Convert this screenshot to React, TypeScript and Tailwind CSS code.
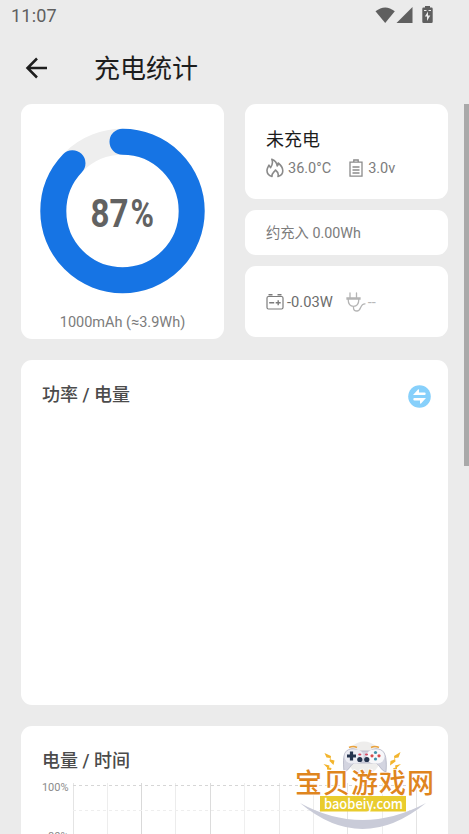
import React from 'react';

const FONT = "font-[Roboto,'Noto_Sans_CJK_SC',sans-serif]";

const RADIUS = 69.2;
const CIRCUMFERENCE = 2 * Math.PI * RADIUS;

const gridColumns = [
  { x: 31.5, color: '#e4e4e4' },
  { x: 65.5, color: '#ededed' },
  { x: 99.5, color: '#d9d9d9' },
  { x: 133.5, color: '#ececec' },
  { x: 168.5, color: '#dcdcdc' },
  { x: 202.5, color: '#efefef' },
  { x: 237.5, color: '#e9e9e9' },
  { x: 271.5, color: '#ededed' },
  { x: 305.5, color: '#e4e4e4' },
  { x: 340.5, color: '#ededed' },
  { x: 374.5, color: '#e4e4e4' },
];

interface CardProps {
  className?: string;
  children?: React.ReactNode;
}

const Card: React.FC<CardProps> = ({ className = '', children }) => (
  <section className={`bg-white rounded-[11px] ${className}`}>{children}</section>
);

const StatusBar = () => (
  <div className="flex h-8 items-center justify-between pl-[11px] pr-[35px] text-[#5f5f5f]">
    <span className="text-[18px] leading-8 tracking-[0.2px]">11:07</span>
    <svg className="-mt-0.5" width="60" height="20" viewBox="0 0 60 20" fill="currentColor">
      <path d="M1.5 6.2Q11.2-1.4 20.8 6.2L11.2 18z" />
      <path d="M38.5 2v16h-16z" />
      <path d="M51 1h5v1.5h1.5q1.2 0 1.2 1.2v13.1q0 1.2-1.2 1.2h-8q-1.2 0-1.2-1.2V3.7q0-1.2 1.2-1.2H51z" />
      <path d="M50 5.5h2.500M54.500 5.500h2.500" stroke="#ebebeb" />
      <path d="M54 6.500v4h2.300l-3.300 5.500v-4.500h-2.200z" fill="#ebebeb" />
    </svg>
  </div>
);

const Header = () => (
  <header className="flex h-[72px] items-center pl-[25px] text-[#1d1d1d]">
    <svg width="24" height="24" viewBox="0 0 24 24" fill="none" stroke="currentColor" strokeWidth="2.500">
      <path d="M12 2.500L2.500 12l9.500 9.500M2.500 12H22" />
    </svg>
    <h1 className="ml-[45px] pt-px text-[26px] leading-9">充电统计</h1>
  </header>
);

const FireIcon = () => (
  <svg width="18" height="20" viewBox="0 0 18 20" fill="none" stroke="#8a8a8a" strokeWidth="1.600" strokeLinejoin="round">
    <path d="M6 18.500C2.500 17.500.8 15 1 12c.2-2 1.200-3.300 2-4.800l1.500 2.500C6.500 7 7 4 5.800 1.200 9 2.500 11 5 11.200 8c.8-.8 1.100-1.800 1-3 2.400 1.800 4.600 4.800 4.600 7.800 0 3-2 5-4.800 5.700.8-2.500 0-4.500-2.600-6.500-1 2-4 3.500-3.400 6.500z" />
  </svg>
);

const ClipboardIcon = () => (
  <svg width="14" height="18" viewBox="0 0 14 18" fill="none" stroke="#8a8a8a" strokeWidth="1.300">
    <path d="M1 3.200h12v14H1zM4.800 3V1h4.400v2M3.500 8h7M3.500 11h7M3.500 14h7" />
  </svg>
);

const BatteryIcon = () => (
  <svg width="18" height="16" viewBox="0 0 18 16" fill="none" stroke="#7c7c7c" strokeWidth="1.200">
    <rect x="1" y="2.500" width="16" height="12.500" rx="1.500" />
    <path d="M2.500 .8h4M11.500.8h4M3.200 8.700h5M9.700 8.700h5M12.200 6.200v5" strokeWidth="1.400" />
  </svg>
);

const PlugIcon = () => (
  <svg width="20" height="20" viewBox="0 0 20 20" fill="none" stroke="#b4b4b4" strokeWidth="1.300" strokeLinecap="round">
    <path d="M4 1v4.500M10.500 1v4.500M1 6h13v1.200H1zM2.200 7.500c0 4.500 2 6.800 5.300 6.800s5.300-2.300 5.300-6.800M7.500 14.500v1.500c0 2 1.200 3 3.500 3 4.500 0 2.500-7.200 8-7.200" />
  </svg>
);

const SwapIcon = () => (
  <svg width="23" height="23" viewBox="0 0 23 23">
    <circle cx="11.500" cy="11.500" r="11.300" fill="#87d0fb" />
    <path d="M5 10L10 4.500q1-.5 1 .5v2.500h5.500q1.200 0 1.200 1.200T16.500 10zM18 13L13 18.500q-1 .5-1-.5v-2.500H6.500q-1.200 0-1.200-1.200T6.500 13z" fill="#fff" />
  </svg>
);

const LevelRing = ({ level }: { level: number }) => (
  <svg width="165" height="166" viewBox="0.5 0 165 166" fill="none">
    <circle cx="83" cy="83" r={RADIUS} stroke="#eee" strokeWidth="26" />
    <circle
      cx="83"
      cy="83"
      r={RADIUS}
      stroke="#1674e4"
      strokeWidth="26"
      strokeLinecap="round"
      strokeDasharray={`${(CIRCUMFERENCE * level) / 100} ${CIRCUMFERENCE}`}
      transform="rotate(-90 83 83)"
    />
    <g className="text-[39.500px] font-bold" fill="#626262">
      <text x="51" y="98.800" textLength="38" lengthAdjust="spacingAndGlyphs">{level}</text>
      <text x="91" y="98.800" textLength="23.500" lengthAdjust="spacingAndGlyphs">%</text>
    </g>
  </svg>
);

const LevelChart = () => (
  <svg width="385" height="70" viewBox="0 0 385 70">
    {gridColumns.map(col => (
      <path key={col.x} d={`M${col.x} 3V70`} stroke={col.color} />
    ))}
    <path d="M31 5.500H375" stroke="#d6d6d6" strokeDasharray="3 3" />
    <path d="M31 30.500H375" stroke="#eee" strokeDasharray="3 3" />
    <path d="M31 55.500H375" stroke="#ddd" strokeDasharray="3 3" />
    <g className="text-[11px]" fill="#8b8b8b" textAnchor="end">
      <text x="26.500" y="11">100%</text>
      <text x="26.500" y="60">80%</text>
    </g>
  </svg>
);

const Gamepad = () => (
  <g>
    <circle cx="74" cy="20" r="16.500" fill="#eeedec" />
    <path
      d="M54 34C53 23 53 14 58 12q5-3 11 1h11q6-4 11-1c5 2 6 11 5 22-5-1-6-7-10-9H64c-4 2-5 8-10 9z"
      fill="#d3d4e0"
      stroke="#a9abbb"
      strokeWidth=".7"
    />
    <rect x="54.500" y="11.500" width="19" height="14" rx="7" fill="#ececf3" />
    <rect x="76.500" y="11.500" width="18" height="14" rx="7" fill="#f7f7fa" />
    <path d="M59 9.500q4-2 8 0M81 9.500q4-2 8 0" fill="none" stroke="#e9a23c" strokeWidth="1.600" />
    <path d="M61.500 13.500v9M57 18h9" stroke="#25344e" strokeWidth="3.200" />
    <circle cx="69.800" cy="21.500" r="2.600" fill="#25344e" />
    <circle cx="76.800" cy="21.500" r="2.600" fill="#25344e" />
    <ellipse cx="69.800" cy="16.500" rx="1.600" ry="1" fill="#d94b64" />
    <ellipse cx="76.500" cy="16.500" rx="1.600" ry="1" fill="#d94b64" />
    <circle cx="85.500" cy="14.500" r="1.600" fill="#3f91a8" />
    <circle cx="85.500" cy="21" r="1.600" fill="#3f91a8" />
    <circle cx="82" cy="17.800" r="1.600" fill="#d84d4d" />
    <circle cx="89" cy="17.800" r="1.600" fill="#d84d4d" />
  </g>
);

const SiteBadge = () => (
  <svg className="absolute left-[290px] top-[738px]" width="150" height="94" viewBox="0 0 150 94">
    <path d="M10 65Q72 117 136 65Q72 99 10 65z" fill="#c9cbd8" />
    <Gamepad />
    <path
      d="M34.500 15l6.500 3-.500 3.500 4 1-1 4.500-4-4 .500-3-3.500-.500zM33.500 26l6 1.500-.500 2 2.500.500-.500 2-4-.500v-2zM110.500 14l-6.500 4 .500 3.500-4 1.500-.500 4.500 5.500-4-.500-3.500 3.500-.500zM111 26l-6 1.500.500 2-2.500 1v1.500l4-.500v-2z"
      fill="#f3b52e"
    />
    <text
      x="5"
      y="55"
      className="font-['Noto_Sans_CJK_SC',sans-serif] text-[27px] font-medium"
      fill="#df851e"
      stroke="#fff"
      strokeWidth="1.600"
      paintOrder="stroke"
      textLength="139"
    >
      宝贝游戏网
    </text>
    <path d="M30 58h86v15.500H30z" fill="#e9cc2d" />
    <text x="34" y="70.500" className="font-['Noto_Sans_CJK_SC',sans-serif] text-[14px] font-medium" fill="#fff" textLength="79" lengthAdjust="spacingAndGlyphs">
      baobeiy.com
    </text>
  </svg>
);

const App: React.FC = () => {
  return (
    <div className={`relative flex h-[834px] w-[469px] flex-col overflow-hidden bg-[#ebebeb] ${FONT}`}>
      <StatusBar />
      <Header />

      <div className="flex min-h-0 flex-1 items-start justify-between pl-[21px]">
        <main className="flex w-[427px] flex-col gap-[21px]">
          <div className="flex justify-between">
            <Card className="flex h-[235px] w-[203px] flex-col items-center pt-6">
              <LevelRing level={87} />
              <p className="mt-[19px] text-[14.500px] leading-5 text-[#7c7c7c]">1000mAh (≈3.9Wh)</p>
            </Card>

            <div className="flex w-[203px] flex-col gap-[11px] text-[14.500px] text-[#7c7c7c]">
              <Card className="h-[95px] pl-[21px] pt-6">
                <h2 className="text-[18px] leading-6 text-[#1c1c1c]">未充电</h2>
                <div className="mt-1.5 flex h-5 items-center">
                  <FireIcon />
                  <span className="ml-1 pt-0.5">36.0°C</span>
                  <span className="ml-[18px]"><ClipboardIcon /></span>
                  <span className="ml-[5px] pt-0.5">3.0v</span>
                </div>
              </Card>
              <Card className="flex h-[45px] items-center pl-[21px] pt-0.5">
                <span className="text-[14.300px]">约充入 0.00Wh</span>
              </Card>
              <Card className="flex h-[71px] items-center pl-[21px]">
                <BatteryIcon />
                <span className="ml-[3px] pt-0.5 text-[14.700px] text-[#6c6c6c]">-0.03W</span>
                <span className="ml-[13px]"><PlugIcon /></span>
                <span className="ml-0.5 pt-0.5 text-[#b8b8b8]">--</span>
              </Card>
            </div>
          </div>

          <Card className="flex h-[345px] items-start justify-between pl-[21px] pr-[17px] pt-[22px]">
            <h2 className="pt-px text-[18px] font-medium leading-6 text-[#4b4b4b]">功率 / 电量</h2>
            <span className="mt-[3px]"><SwapIcon /></span>
          </Card>

          <Card className="h-[240px] pl-[21px] pt-[23px]">
            <h2 className="mb-[7px] text-[18px] font-medium leading-6 text-[#4b4b4b]">电量 / 时间</h2>
            <LevelChart />
          </Card>
        </main>

        <div className="h-[362px] w-[5px] bg-[#a9a9a9]" />
      </div>

      <SiteBadge />
    </div>
  );
};

export default App;
